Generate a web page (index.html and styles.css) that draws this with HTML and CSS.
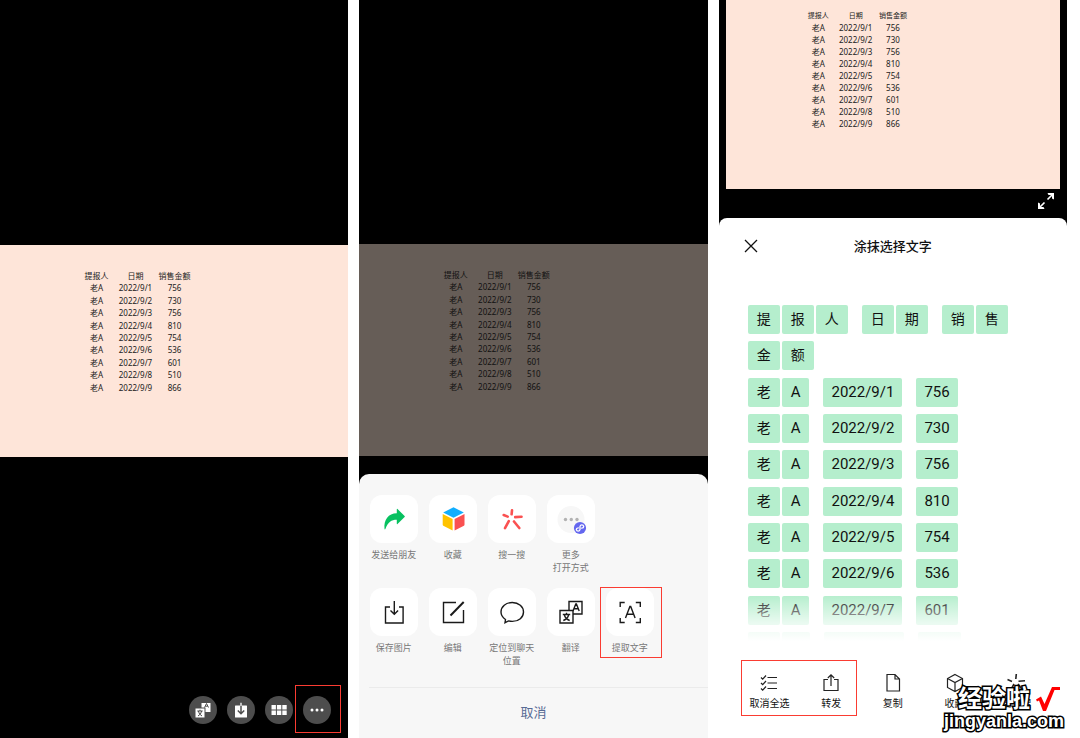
FILE: index.html
```html
<!DOCTYPE html>
<html lang="zh-CN">
<head>
<meta charset="utf-8">
<meta name="viewport" content="width=device-width, initial-scale=1">
<title>提取文字</title>
<link rel="stylesheet" href="styles.css">
</head>
<body>
<main class="screens">

  <section class="phone viewer">
    <div class="photo">
      <table class="sheet-table">
        <thead><tr><th>提报人</th><th>日期</th><th>销售金额</th></tr></thead>
        <tbody>
          <tr><td>老A</td><td>2022/9/1</td><td>756</td></tr>
          <tr><td>老A</td><td>2022/9/2</td><td>730</td></tr>
          <tr><td>老A</td><td>2022/9/3</td><td>756</td></tr>
          <tr><td>老A</td><td>2022/9/4</td><td>810</td></tr>
          <tr><td>老A</td><td>2022/9/5</td><td>754</td></tr>
          <tr><td>老A</td><td>2022/9/6</td><td>536</td></tr>
          <tr><td>老A</td><td>2022/9/7</td><td>601</td></tr>
          <tr><td>老A</td><td>2022/9/8</td><td>510</td></tr>
          <tr><td>老A</td><td>2022/9/9</td><td>866</td></tr>
        </tbody>
      </table>
    </div>
    <div class="round-bar">
      <button class="round" aria-label="翻译">
        <svg viewBox="0 0 28 28"><path fill="#fff" d="M12.500 7h9v9h-5v-4.500h-4z"/><rect x="6.500" y="12.500" width="9" height="9" fill="#fff"/><path fill="none" stroke="#4d4d4d" stroke-width="1" d="M15.500 11.500l2-4 2 4M16.300 10.200h2.400M8.300 15h5.400M11 13.700V15M9 20q3-1.500 3.700-5M13 20q-3-1.500-3.700-5"/></svg>
      </button>
      <button class="round" aria-label="保存">
        <svg viewBox="0 0 28 28"><rect x="8" y="9.500" width="12" height="12" rx="0.500" fill="#fff"/><path fill="none" stroke="#4d4d4d" stroke-width="1.500" d="M14 9.500v8M10.800 14.500l3.200 3.200 3.200-3.200"/><path stroke="#fff" stroke-width="1.300" d="M14 6.700v3"/></svg>
      </button>
      <button class="round" aria-label="图片列表">
        <svg viewBox="0 0 28 28" fill="#fff"><path d="M6.500 9h4.400v4.500H6.500zM11.900 9h4.400v4.500h-4.400zM17.300 9h4.400v4.500h-4.400zM6.500 14.500h4.400V19H6.500zM11.900 14.500h4.400V19h-4.400zM17.300 14.500h4.400V19h-4.400z"/></svg>
      </button>
      <button class="round marked mark-more" aria-label="更多">
        <svg viewBox="0 0 28 28" fill="#fff"><circle cx="9" cy="14" r="1.500"/><circle cx="14" cy="14" r="1.500"/><circle cx="19" cy="14" r="1.500"/></svg>
      </button>
    </div>
  </section>

  <section class="phone actions">
    <div class="photo dim">
      <table class="sheet-table">
        <thead><tr><th>提报人</th><th>日期</th><th>销售金额</th></tr></thead>
        <tbody>
          <tr><td>老A</td><td>2022/9/1</td><td>756</td></tr>
          <tr><td>老A</td><td>2022/9/2</td><td>730</td></tr>
          <tr><td>老A</td><td>2022/9/3</td><td>756</td></tr>
          <tr><td>老A</td><td>2022/9/4</td><td>810</td></tr>
          <tr><td>老A</td><td>2022/9/5</td><td>754</td></tr>
          <tr><td>老A</td><td>2022/9/6</td><td>536</td></tr>
          <tr><td>老A</td><td>2022/9/7</td><td>601</td></tr>
          <tr><td>老A</td><td>2022/9/8</td><td>510</td></tr>
          <tr><td>老A</td><td>2022/9/9</td><td>866</td></tr>
        </tbody>
      </table>
    </div>
    <div class="action-sheet">
      <div class="action-row">
        <button class="action"><span class="tile">
          <svg viewBox="0 0 48 48"><path fill="#07c160" d="M26.800 14.300q0-.9.700-.4l7.100 7q.6.600 0 1.200l-7.100 7q-.7.500-.7-.3v-4c-5.500 0-8.700 2.300-11.400 9.200q-.6 1-.9-.2c-.8-9 3.800-15.300 12.300-15.500z"/></svg>
        </span><span>发送给朋友</span></button>
        <button class="action"><span class="tile">
          <svg viewBox="0 0 48 48"><path fill="#10aeff" d="M24.500 12.300l10.300 5.200-10.300 5.200-10.300-5.200z"/><path fill="#ffc300" d="M13.700 19l9.900 4.900v11.600l-9.300-4.700q-.6-.3-.6-1z"/><path fill="#fa5151" d="M35.500 19l-9.900 4.900v11.600l9.300-4.700q.6-.3.600-1z"/></svg>
        </span><span>收藏</span></button>
        <button class="action"><span class="tile">
          <svg viewBox="0 0 48 48" fill="none" stroke="#fa5151" stroke-width="2.600" stroke-linecap="round"><path d="M24 15.300l-.4 4M15.700 20l4 1.600M33.500 21.700l-6.300.4M31.300 33L26 26.500M17 33.200l3.800-7"/></svg>
        </span><span>搜一搜</span></button>
        <button class="action"><span class="tile">
          <svg viewBox="0 0 48 48"><circle cx="24" cy="24.500" r="13.500" fill="#f7f7f7"/><g fill="#b2b2b2"><circle cx="18.500" cy="24.500" r="1.700"/><circle cx="24.300" cy="24.500" r="1.700"/><circle cx="30" cy="24.500" r="1.700"/></g><circle cx="33" cy="33" r="6.100" fill="#6467ef"/><path fill="none" stroke="#fff" stroke-width="1.300" stroke-linecap="round" d="M31.300 32.800q-2 .2-2 1.800a1.900 1.900 0 0 0 3.700 0v-3.200a1.900 1.900 0 0 1 3.700 0q0 1.600-2 1.800"/></svg>
        </span><span>更多<br>打开方式</span></button>
      </div>
      <div class="action-row">
        <button class="action"><span class="tile">
          <svg viewBox="0 0 48 48" class="line"><path d="M20 19h-4.500v16h17.600V19H29M24.300 13v13M20.500 22.500l3.800 3.800 3.800-3.800"/></svg>
        </span><span>保存图片</span></button>
        <button class="action"><span class="tile">
          <svg viewBox="0 0 48 48" class="line"><path d="M27 14.500H14.500v20h20V22"/><path stroke-width="2" d="M21.500 27.500L34.700 14"/></svg>
        </span><span>编辑</span></button>
        <button class="action"><span class="tile">
          <svg viewBox="0 0 48 48" class="line"><path d="M17.500 31.500c-3-2-4.500-4.600-4.500-7.500 0-5.500 4.900-9.500 11.300-9.500s11.200 4.200 11.200 9.500-4.700 9.400-11.200 9.400q-2 0-3.800-.5l-3.500 1.800z"/></svg>
        </span><span>定位到聊天<br>位置</span></button>
        <button class="action"><span class="tile">
          <svg viewBox="0 0 48 48" class="line"><path d="M22 22V13.500h13V26h-9"/><path d="M13 22.500h13V35H13z"/><path d="M26 23l2.800-7h.6l2.800 7M27 20.700h4M15.800 26.500h7.400M19.500 24.700v1.800M16.300 32.500q4.500-1.500 5.400-6M22.700 32.500q-4.500-1.500-5.400-6"/></svg>
        </span><span>翻译</span></button>
        <button class="action marked mark-extract"><span class="tile">
          <svg viewBox="0 0 48 48" class="line"><path d="M14.200 19v-4.500h4.500M29.800 14.500h4.500V19M34.300 30v4.500h-4.500M18.700 34.500h-4.500V30M19.500 30l4.400-11.500h.8L29.100 30M21 26.300h6.600"/></svg>
        </span><span>提取文字</span></button>
      </div>
      <button class="cancel">取消</button>
    </div>
  </section>

  <section class="phone extract">
    <div class="photo compact">
      <table class="sheet-table">
        <thead><tr><th>提报人</th><th>日期</th><th>销售金额</th></tr></thead>
        <tbody>
          <tr><td>老A</td><td>2022/9/1</td><td>756</td></tr>
          <tr><td>老A</td><td>2022/9/2</td><td>730</td></tr>
          <tr><td>老A</td><td>2022/9/3</td><td>756</td></tr>
          <tr><td>老A</td><td>2022/9/4</td><td>810</td></tr>
          <tr><td>老A</td><td>2022/9/5</td><td>754</td></tr>
          <tr><td>老A</td><td>2022/9/6</td><td>536</td></tr>
          <tr><td>老A</td><td>2022/9/7</td><td>601</td></tr>
          <tr><td>老A</td><td>2022/9/8</td><td>510</td></tr>
          <tr><td>老A</td><td>2022/9/9</td><td>866</td></tr>
        </tbody>
      </table>
    </div>
    <div class="expand-row">
      <button class="expand" aria-label="展开">
        <svg viewBox="0 0 18 18"><path fill="none" stroke="#fff" stroke-width="1.600" d="M10.500 7.500L15 3M7.500 10.500L3 15"/><path fill="#fff" d="M10.500 1H17v6.500l-2-1V3h-3.500zM7.500 17H1v-6.500l2 1V15h3.500z"/></svg>
      </button>
    </div>
    <div class="text-sheet">
      <header class="text-head">
        <button class="close" aria-label="关闭"><svg viewBox="0 0 14 14" fill="none" stroke="#111" stroke-width="1.300"><path d="M1 1l12 12M13 1L1 13"/></svg></button>
        <h1>涂抹选择文字</h1>
      </header>
      <div class="words">
        <div class="lines">
          <div class="line-row"><p><span class="han">提</span><span class="han">报</span><span class="han">人</span></p><p><span class="han">日</span><span class="han">期</span></p><p><span class="han">销</span><span class="han">售</span></p></div>
          <div class="line-row"><p><span class="han">金</span><span class="han">额</span></p></div>
          <div class="line-row"><p><span class="han">老</span><span>A</span></p><p><span class="num">2022/9/1</span></p><p><span class="num">756</span></p></div>
          <div class="line-row"><p><span class="han">老</span><span>A</span></p><p><span class="num">2022/9/2</span></p><p><span class="num">730</span></p></div>
          <div class="line-row"><p><span class="han">老</span><span>A</span></p><p><span class="num">2022/9/3</span></p><p><span class="num">756</span></p></div>
          <div class="line-row"><p><span class="han">老</span><span>A</span></p><p><span class="num">2022/9/4</span></p><p><span class="num">810</span></p></div>
          <div class="line-row"><p><span class="han">老</span><span>A</span></p><p><span class="num">2022/9/5</span></p><p><span class="num">754</span></p></div>
          <div class="line-row"><p><span class="han">老</span><span>A</span></p><p><span class="num">2022/9/6</span></p><p><span class="num">536</span></p></div>
          <div class="line-row"><p><span class="han">老</span><span>A</span></p><p><span class="num">2022/9/7</span></p><p><span class="num">601</span></p></div>
          <div class="line-row" aria-hidden="true"><p><span class="han"></span><span class="latin-slot"></span></p><p><span class="date-slot"></span></p><p><span class="number-slot"></span></p></div>
        </div>
      </div>
      <div class="tools">
        <div class="tool-pair marked mark-pair">
          <button class="tool"><svg viewBox="0 0 20 20"><path d="M8.500 4.500H18M8.500 10H18M8.500 15.500H18M2 4.500l1.700 1.700 3.300-3.700M2 10l1.700 1.700L7 8M2 15.500l1.700 1.700L7 13.500"/></svg><span>取消全选</span></button>
          <button class="tool"><svg viewBox="0 0 20 20"><path d="M7 6.500H3v11h14v-11h-4M10 13V2M6.800 5L10 1.800 13.200 5"/></svg><span>转发</span></button>
        </div>
        <button class="tool"><svg viewBox="0 0 20 20"><path d="M4 1.500h8l4.500 4.500v12H4zM12 1.500V6h4.500"/></svg><span>复制</span></button>
        <button class="tool"><svg viewBox="0 0 20 20"><path d="M10 1.500l7.500 4v9l-7.500 4-7.500-4v-9zM2.500 5.500l7.500 4 7.500-4M10 9.500v9"/></svg><span>收藏</span></button>
        <button class="tool"><svg viewBox="0 0 20 20"><path stroke-width="1.600" d="M10.300 1l-.5 5M1.500 6.500l4.500 2M12.500 8.300l6.500-.6M12 11l4.500 6M8 11l-3.500 6.500"/></svg><span>搜一搜</span></button>
      </div>
    </div>
  </section>
</main>

<aside class="watermark">
  <div class="mark-title"><span>经验啦</span>
    <svg viewBox="0 0 24 26"><path fill="#f00" d="M0 13.500l5-3 3.500 7.500L16 1h8v3h-5.500L10 25H7L3 14.500l-2 1z"/></svg>
  </div>
  <div class="mark-site">jingyanla.com</div>
</aside>
</body>
</html>
```
FILE: styles.css
```css
* { box-sizing: border-box; }

body {
  margin: 0;
  background: #fff;
  color: #111;
  font-family: "Noto Sans", "Noto Sans CJK SC", sans-serif;
}

button {
  padding: 0;
  border: 0;
  background: none;
  color: inherit;
  font: inherit;
  cursor: pointer;
}

svg { display: block; }

.screens {
  display: grid;
  grid-template-columns: repeat(3, minmax(0, 1fr));
  gap: 11px;
  min-height: 100vh;
  padding-right: 13px;
}

.phone {
  display: flex;
  flex-direction: column;
  background: #000;
}

.viewer { padding-top: 245px; }
.actions { padding-top: 244px; }

/* spreadsheet picture */
.photo {
  height: 212px;
  padding: 25px 0 0 77px;
  background: #fee5d9;
  color: #222;
}

.photo.dim {
  background: #665d57;
  color: #111;
}

.photo.compact {
  height: 189px;
  margin: 0 7px;
  padding: 10px 0 0 74px;
}

.sheet-table {
  width: 117px;
  height: 124px;
  border-collapse: collapse;
  table-layout: fixed;
  font-size: 8px;
  line-height: 12px;
  text-align: center;
  white-space: nowrap;
}

.compact .sheet-table {
  width: 112px;
  height: 120px;
}

.sheet-table th,
.sheet-table td {
  padding: 0;
  font-weight: 400;
}

.compact th { font-size: 7px; }

/* red callout frames */
.marked { position: relative; }

.marked::after {
  content: "";
  position: absolute;
  border: 1px solid #fa3c32;
  pointer-events: none;
}

.mark-more::after { inset: -11px -10px -9px -8px; }
.mark-extract::after { inset: -1px -3px -4px 0; }
.mark-pair::after { inset: -13px 5px -5px 2px; }

.round-bar {
  display: flex;
  justify-content: flex-end;
  gap: 10px;
  margin-top: auto;
  padding: 0 17px 14px;
}

.round {
  width: 28px;
  height: 28px;
  border-radius: 50%;
  background: #4d4d4d;
}

/* share sheet */
.action-sheet {
  flex: 1;
  display: flex;
  flex-direction: column;
  margin-top: 18px;
  padding-top: 21px;
  border-radius: 10px 10px 0 0;
  background: #f7f7f7;
}

.action-row {
  display: flex;
  min-height: 93px;
  padding-left: 5px;
}

.action-row + .action-row { min-height: 99px; }

.action {
  display: flex;
  flex-direction: column;
  align-items: center;
  align-self: flex-start;
  gap: 5px;
  width: 59px;
  color: #777;
  font-size: 9px;
  line-height: 13px;
  white-space: nowrap;
}

.tile {
  width: 48px;
  height: 48px;
  border-radius: 12px;
  background: #fff;
}

.line {
  fill: none;
  stroke: #1a1a1a;
  stroke-width: 1.4;
}

.cancel {
  flex: 1;
  margin-left: 10px;
  padding: 0 10px 3px 0;
  border-top: 1px solid #ebebeb;
  color: #576b95;
  font-size: 13px;
}

/* extracted text */
.expand-row {
  display: flex;
  justify-content: flex-end;
  height: 29px;
  padding: 3px 12px 0 0;
}

.expand {
  width: 18px;
  height: 18px;
}

.text-sheet {
  flex: 1;
  display: flex;
  flex-direction: column;
  border-radius: 8px 8px 0 0;
  background: #fff;
}

.text-head {
  display: grid;
  grid-template-columns: 1fr auto 1fr;
  align-items: center;
  height: 55px;
  padding: 0 25px;
}

.close {
  width: 14px;
  height: 14px;
}

.text-head h1 {
  margin: 0;
  font-size: 13px;
  font-weight: 500;
  line-height: 20px;
}

.words {
  position: relative;
  height: 336px;
  margin-top: 32px;
  padding-left: 29px;
  overflow: hidden;
}

.words::after {
  content: "";
  position: absolute;
  inset: auto 0 0;
  height: 46px;
  background: linear-gradient(rgba(255, 255, 255, 0), rgba(255, 255, 255, 0.7) 60%, #fff);
}

.lines {
  display: flex;
  flex-direction: column;
  justify-content: space-between;
  height: 356px;
}

.line-row {
  display: flex;
  gap: 14px;
}

.line-row p {
  display: flex;
  gap: 2px;
  margin: 0;
}

.line-row span {
  height: 29px;
  padding: 0 9px;
  border-radius: 2px;
  background: #b5eecd;
  font-family: Roboto, "Noto Sans CJK SC", sans-serif;
  font-size: 15px;
  line-height: 29px;
}

.line-row .num { padding: 0 8px; }

.line-row .han {
  min-width: 32px;
  font-size: 14px;
}

.line-row .latin-slot { width: 28px; }
.line-row .date-slot { width: 80px; }
.line-row .number-slot { width: 43px; }

.tools {
  display: flex;
  margin-top: auto;
  padding: 0 20px 27px;
}

.tool-pair {
  display: flex;
  flex: 2;
}

.tool {
  display: flex;
  flex: 1;
  flex-direction: column;
  align-items: center;
  gap: 2px;
  font-size: 10px;
  line-height: 16px;
  white-space: nowrap;
}

.tool svg {
  width: 20px;
  height: 20px;
  fill: none;
  stroke: #222;
  stroke-width: 1.2;
}

/* site stamp laid over the page corner */
.watermark {
  position: absolute;
  top: 686px;
  right: 16px;
  color: #fff;
  font-family: "Liberation Sans", "Noto Sans CJK SC", sans-serif;
  font-weight: 700;
  -webkit-text-stroke: 3px #000;
  paint-order: stroke fill;
}

.mark-title {
  display: flex;
  align-items: center;
  gap: 6px;
  height: 26px;
  padding-left: 14px;
  font-size: 24px;
  line-height: 26px;
}

.mark-title svg {
  width: 24px;
  height: 26px;
}

.mark-site {
  font-size: 18px;
  line-height: 18px;
}
```
